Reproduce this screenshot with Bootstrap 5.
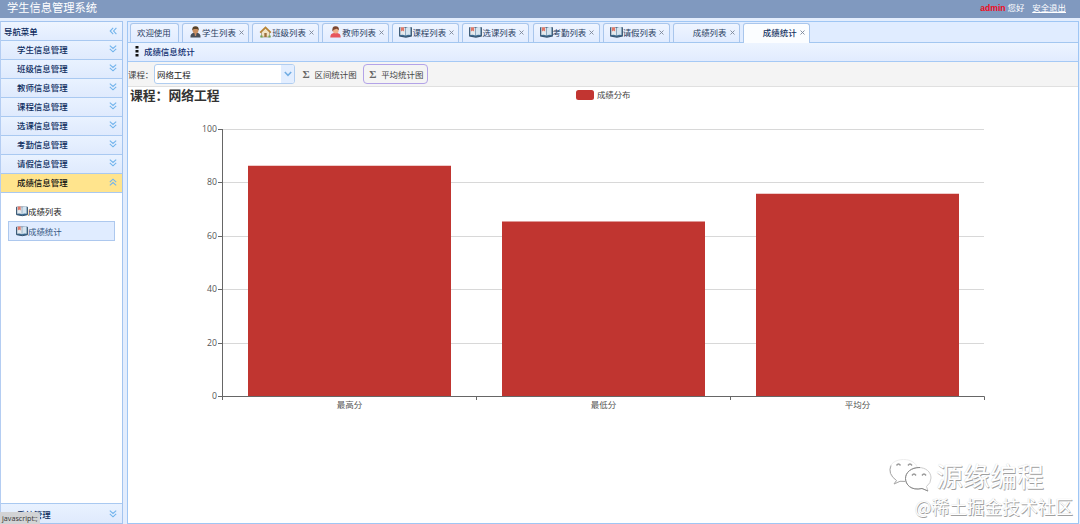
<!DOCTYPE html>
<html lang="zh-CN">
<head>
<meta charset="utf-8">
<title>学生信息管理系统</title>
<meta name="viewport" content="width=device-width, initial-scale=1">
<link href="https://cdn.jsdelivr.net/npm/bootstrap@5.3.0/dist/css/bootstrap.min.css" rel="stylesheet">
<style>
body{height:524px;overflow:hidden;background:#e3edfd;font:8.45px/12px "Noto Sans","Noto Sans CJK SC",sans-serif;color:#222}
svg{display:block;flex:none}
.cjk,.side,.tabs,.bar-title,.tools{font-family:"Noto Sans CJK SC",sans-serif}
.topbar{height:18px;background:#8099bf;color:#fff;padding:0 14px 4px 7px}
.topbar h1{font:11.25px/14px "Noto Sans CJK SC",sans-serif;margin:0}
.topbar .who{color:#f00a20;font:bold 8.6px/12px "Liberation Sans",sans-serif}
.topbar a{color:#fff;margin-left:6px}
.work{height:506px;padding-top:3px}
.side{width:123px;border:1px solid #a3c4ef;border-left-color:#b4cdf2;background:#fff;margin-right:4px}
.side-row{height:19px;flex:none;border-bottom:1px solid #a9c9f1;padding:0 5px 2px 16px;background:linear-gradient(#e9f2ff,#dfeafd);color:#0e2d5f;font-weight:500}
.side-head{padding-left:3px;padding-bottom:1px;background:linear-gradient(#eef5ff,#e1ecfe)}
.side-row.on{background:#ffe48d;color:#111;height:19px}
.side-row.last{border-top:1px solid #a9c9f1;border-bottom:0;height:20px;padding-bottom:0}
.leaf{height:20px;padding:0 0 1px 7px;margin:0 7px;border:1px solid transparent}
.leaf.sel{background:#e0ecff;border-color:#adc8ee;color:#35567f;padding-bottom:0}
.main{border:1px solid #9fc6f4;background:#fff;min-width:0;margin-right:1px}
.tabs{height:21px;flex:none;background:#e0ecff;border-bottom:1px solid #a3c7f0;padding:1px 0 0 2px;gap:3.1px}
.tab-item{width:67px;height:19px;border:1px solid #a9c6ec;border-bottom:0;border-radius:3px 3px 0 0;background:linear-gradient(#eff5ff,#e1ecff);color:#29405f;padding:0 0 2px 6px;white-space:nowrap}
.tab-item.home{width:49px;padding-left:6px}
.tab-item.on{height:20px;background:#fbfdff;color:#14335f;font-weight:500;padding-bottom:3px}
.tab-item .x{width:5px;height:5px;margin-left:3px}
.tab-item .ico{width:13px;height:12px;flex:none}
.bar-title{height:19px;flex:none;background:linear-gradient(#edf4ff,#e1ebfe);border-bottom:1px solid #a5c9f5;color:#0e2d6f;font-weight:500;padding:0 0 2px 7px}
.tools{height:25px;flex:none;background:#f4f4f4;border-bottom:1px solid #e0e0e0;color:#444;gap:1.5px}
.tools .caption{width:24.5px;white-space:nowrap;overflow:visible}
.combo{width:141px;height:20px;background:#fff;border:1px solid #b0cdf0;border-radius:3px;padding-left:2px;overflow:hidden;color:#222}
.combo .arrow{width:13px;height:18px;background:#e3eeff}
.tool-btn{height:20px;padding:0 4px 0 5px;border:1px solid transparent;border-radius:4px;white-space:nowrap}
.tool-btn.on{border-color:#b3a3e8}
.sigma{font:bold 11px/12px "Liberation Serif",serif;width:12px;color:#666}
.status{left:0;bottom:0;width:40px;height:12px;background:#d2d3d5;color:#333;border-radius:0 3px 0 0;padding-left:2px;font:7.2px/12px "Open Sans",sans-serif}
.mark-box{right:7px;bottom:5px;color:#fff;white-space:nowrap;text-shadow:.8px .8px 0 #a0a0a0,0 0 1px #c9c9c9}
.mark-one{font:27px/34px "Noto Sans CJK SC",sans-serif;margin-right:29px}
.mark-two{font:17.7px/25px "Noto Sans CJK SC",sans-serif}
</style>
</head>
<body>
<svg width="0" height="0" class="position-absolute">
<defs>
<symbol id="down" viewBox="0 0 8 8"><path d="M.8 .6 4 3.4 7.2.6M.8 3.8 4 6.8 7.2 3.8" fill="none" stroke="#72b4ec" stroke-width="1.1"/></symbol>
<symbol id="book" viewBox="0 0 12 11"><path d="M.6 1.6H11.4V9.2L6.4 10.2 .6 9.2z" fill="#416f94" stroke="#35536f" stroke-width="1"/><path d="M1.2 1.1Q4 .6 5.8 1.8V8.7Q4 7.6 1.2 8.2z" fill="#e4e9ed"/><path d="M6.2 1.8Q8 .6 10.6 1.1V8.2Q8 7.6 6.2 8.7z" fill="#d5e4ef"/><path d="M1.8 1H4.7V5L3.2 4 1.8 5z" fill="#e07868"/></symbol>
<symbol id="student" viewBox="0 0 12 12"><path d="M1 11.5Q.6 7.4 4.5 6.8H7.5Q11.4 7.4 11 11.5z" fill="#494f58"/><path d="M5 7H7L6.6 10H5.4z" fill="#c78a63"/><circle cx="6" cy="4.4" r="2.9" fill="#c98f60"/><path d="M2.8 4.4Q2.4.3 6 .3T9.2 4.4L7.8 3H4.3z" fill="#594227"/></symbol>
<symbol id="teacher" viewBox="0 0 12 12"><path d="M.8 11.5Q.6 7.4 4.5 7H7.5Q11.4 7.4 11.2 11.5z" fill="#e6565c"/><circle cx="6.2" cy="4.6" r="2.9" fill="#efb38a"/><path d="M2.9 5.5Q2.2.4 6 .3T9.4 4.2L7.2 2.8 4.3 3.8z" fill="#7d4731"/></symbol>
<symbol id="house" viewBox="0 0 12 12"><path d="M2 6V11H10V6L6 2.4z" fill="#f1e4c5" stroke="#8f7a57" stroke-width=".6"/><path d="M.6 6.6 6 1.4 11.4 6.6" fill="none" stroke="#b98534" stroke-width="1.5"/><path d="M4.8 7H7.2V11H4.8z" fill="#9c713e"/><path d="M.8 9.5H3V11.4H.8zM9 9.5H11.2V11.4H9z" fill="#71a450"/></symbol>
<symbol id="cross" viewBox="0 0 5 5"><path d="M.5.5 4.5 4.5M4.5.5.5 4.5" stroke="#7a8698" stroke-width=".9"/></symbol>
</defs>
</svg>

<header class="topbar d-flex justify-content-between align-items-center">
  <h1>学生信息管理系统</h1>
  <div class="cjk"><span class="who">admin</span> 您好 <a href="#">安全退出</a></div>
</header>

<div class="work d-flex">
  <aside class="side d-flex flex-column flex-shrink-0">
    <div class="side-row side-head d-flex align-items-center justify-content-between">导航菜单<svg width="8" height="8" style="transform:rotate(90deg)"><use href="#down"/></svg></div>
    <div class="side-row d-flex align-items-center justify-content-between">学生信息管理<svg width="8" height="8"><use href="#down"/></svg></div>
    <div class="side-row d-flex align-items-center justify-content-between">班级信息管理<svg width="8" height="8"><use href="#down"/></svg></div>
    <div class="side-row d-flex align-items-center justify-content-between">教师信息管理<svg width="8" height="8"><use href="#down"/></svg></div>
    <div class="side-row d-flex align-items-center justify-content-between">课程信息管理<svg width="8" height="8"><use href="#down"/></svg></div>
    <div class="side-row d-flex align-items-center justify-content-between">选课信息管理<svg width="8" height="8"><use href="#down"/></svg></div>
    <div class="side-row d-flex align-items-center justify-content-between">考勤信息管理<svg width="8" height="8"><use href="#down"/></svg></div>
    <div class="side-row d-flex align-items-center justify-content-between">请假信息管理<svg width="8" height="8"><use href="#down"/></svg></div>
    <div class="side-row on d-flex align-items-center justify-content-between">成绩信息管理<svg width="8" height="8" style="transform:rotate(180deg)"><use href="#down"/></svg></div>
    <div class="flex-grow-1 pt-2">
      <div class="leaf d-flex align-items-center"><svg width="12" height="12"><use href="#book"/></svg>成绩列表</div>
      <div class="leaf sel d-flex align-items-center"><svg width="12" height="12"><use href="#book"/></svg>成绩统计</div>
    </div>
    <div class="side-row last d-flex align-items-center justify-content-between">系统管理<svg width="8" height="8"><use href="#down"/></svg></div>
  </aside>

  <main class="main d-flex flex-column flex-grow-1">
    <nav class="tabs d-flex">
      <div class="tab-item home d-flex align-items-center">欢迎使用</div>
      <div class="tab-item d-flex align-items-center"><svg class="ico"><use href="#student"/></svg>学生列表<svg class="x"><use href="#cross"/></svg></div>
      <div class="tab-item d-flex align-items-center"><svg class="ico"><use href="#house"/></svg>班级列表<svg class="x"><use href="#cross"/></svg></div>
      <div class="tab-item d-flex align-items-center"><svg class="ico"><use href="#teacher"/></svg>教师列表<svg class="x"><use href="#cross"/></svg></div>
      <div class="tab-item d-flex align-items-center"><svg class="ico"><use href="#book"/></svg>课程列表<svg class="x"><use href="#cross"/></svg></div>
      <div class="tab-item d-flex align-items-center"><svg class="ico"><use href="#book"/></svg>选课列表<svg class="x"><use href="#cross"/></svg></div>
      <div class="tab-item d-flex align-items-center"><svg class="ico"><use href="#book"/></svg>考勤列表<svg class="x"><use href="#cross"/></svg></div>
      <div class="tab-item d-flex align-items-center"><svg class="ico"><use href="#book"/></svg>请假列表<svg class="x"><use href="#cross"/></svg></div>
      <div class="tab-item d-flex align-items-center"><span class="ico"></span>成绩列表<svg class="x"><use href="#cross"/></svg></div>
      <div class="tab-item on d-flex align-items-center"><span class="ico"></span>成绩统计<svg class="x"><use href="#cross"/></svg></div>
    </nav>
    <div class="bar-title d-flex align-items-center"><svg width="9" height="12"><path d="M.5 1h3v2.4h-3zM.5 5h3v2.4h-3zM.5 9h3v2.4h-3z" fill="#111"/></svg>成绩信息统计</div>
    <div class="tools d-flex align-items-center">
      <span class="caption">课程：</span>
      <div class="combo d-flex align-items-center justify-content-between">网络工程<div class="arrow d-flex align-items-center justify-content-center"><svg width="8" height="6"><path d="M.8 1 4 4.3 7.2 1" fill="none" stroke="#73aee3" stroke-width="1.5"/></svg></div></div>
      <div class="tool-btn d-flex align-items-center"><span class="sigma">Σ</span>区间统计图</div>
      <div class="tool-btn on d-flex align-items-center"><span class="sigma">Σ</span>平均统计图</div>
    </div>
    <svg class="cjk overflow-visible" width="950" height="435" viewBox="128 87 950 435">
      <text x="130" y="100" font-size="12.8" font-weight="700" fill="#333">课程：网络工程</text>
      <rect x="576" y="90" width="18" height="10" rx="2.5" fill="#c23531"/>
      <text x="597" y="98" font-size="8.4" fill="#444">成绩分布</text>
      <path d="M222 129.5H984M222 182.5H984M222 236.5H984M222 289.5H984M222 343.5H984" stroke="#d8d8d8"/>
      <g fill="#c03530"><path d="M248 165.8h203V396H248zM502 221.5h203V396H502zM756 193.7h203V396H756z"/></g>
      <path d="M222.5 129V400M218 129.5H222M218 182.5H222M218 236.5H222M218 289.5H222M218 343.5H222M218 396.5H984.5V400M476.5 396V400M730.5 396V400" fill="none" stroke="#666"/>
      <g font-family="Open Sans, sans-serif" font-size="8.7" fill="#555" text-anchor="end">
        <text x="217" y="131.5">100</text><text x="217" y="185">80</text><text x="217" y="238.5">60</text><text x="217" y="292">40</text><text x="217" y="345.5">20</text><text x="217" y="399">0</text>
      </g>
      <g font-size="8.5" fill="#555" text-anchor="middle">
        <text x="349.5" y="408">最高分</text><text x="603.5" y="408">最低分</text><text x="857.5" y="408">平均分</text>
      </g>
    </svg>
  </main>
</div>

<div class="status position-absolute">javascript:;</div>
<div class="mark-box position-absolute d-flex flex-column align-items-end">
  <div class="mark-one d-flex align-items-center"><svg class="me-1" width="44" height="36" viewBox="0 0 44 36" fill="#fff" stroke="#aaa" stroke-width="1"><path d="M8.5 22.5Q1.5 18 1.5 12C1.5 5.5 8 1.5 15.5 1.5S28 5 29.5 10Q17 12 17.5 23L12 23.3 6 26z" stroke="#eee"/><path d="M3 7.5Q-.5 16 8.5 22.5L6 26 12 23.3 17 23.5" fill="none"/><path d="M30.5 9.5C38 9.5 43 14 43 20Q43 25 38.5 28.5L40 33 34 30.5C23 33 17.5 26.5 17.5 20.5S23 9.5 30.5 9.5z" stroke="#ccc"/><path d="M32 9.5C23 9.5 17.5 14.5 17.5 20.5S23 33 34 30.5L40 33" fill="none" stroke="#888"/><path d="M8.5 7.5q2-3 4 0M20 7.5q2-3 4 0M24 17.5q2-3 4 0M34 17.5q2-3 4 0" fill="none" stroke="#999" stroke-width="1.4"/></svg>源缘编程</div>
  <div class="mark-two">@稀土掘金技术社区</div>
</div>
<script src="https://cdn.jsdelivr.net/npm/bootstrap@5.3.0/dist/js/bootstrap.bundle.min.js"></script>
</body>
</html>
